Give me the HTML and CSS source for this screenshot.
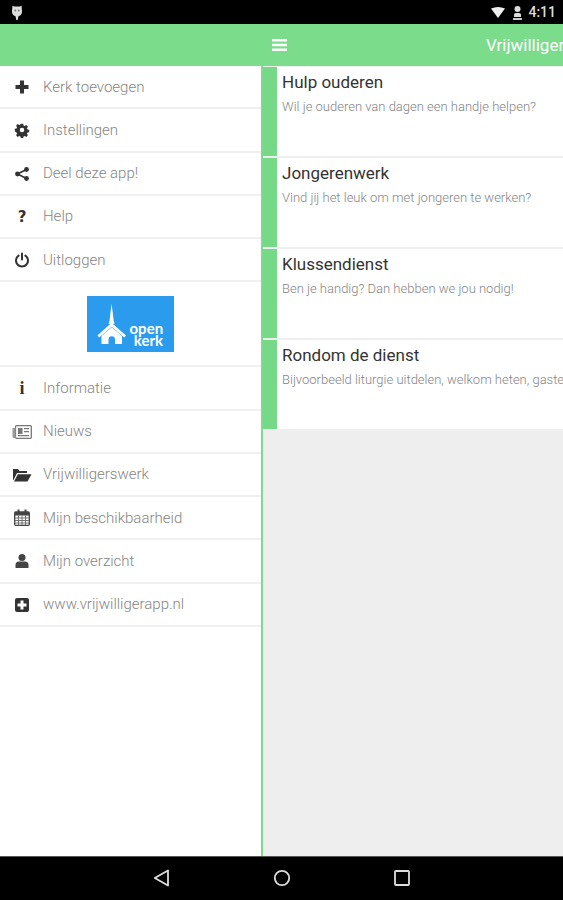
FILE: index.html
```html
<!DOCTYPE html>
<html lang="nl">
<head>
    <meta charset="UTF-8">
    <meta name="viewport" content="width=device-width, initial-scale=1.0">
    <title>Vrijwilligerswerk</title>
    <link rel="stylesheet" href="styles.css">
</head>
<body>
    <div class="statusbar">
        <svg class="status-pin" width="12" height="17" viewBox="0 0 12 17"><path fill="#ddd" d="M1.500 1.500l1.500 1h6l1.500-1 .5 5.500a5 5 0 0 1-3.500 5.200L6.700 16H5.300l-.8-3.800A5 5 0 0 1 1 7z"/><circle cx="4.300" cy="6.500" r=".9" fill="#777"/><circle cx="7.700" cy="6.500" r=".9" fill="#777"/></svg>
        <div class="status-right">
            <svg width="14" height="11" viewBox="0 0 14 11"><path fill="#eee" d="M0 1.500Q7-1.500 14 1.500L7 11z"/></svg>
            <svg width="11" height="15" viewBox="0 0 11 15"><path fill="#ccc" d="M1 13h9v2H1z"/><circle cx="5.500" cy="4" r="3" fill="#ddd"/><path fill="#ddd" d="M2 12V9.500Q2 8 4 8h3q2 0 2 1.500V12z"/></svg>
            <span class="status-time">4:11</span>
        </div>
    </div>

    <div class="topbar">
        <svg class="burger" width="15" height="12" viewBox="0 0 15 12"><path fill="#fff" d="M0 0h15v2.600H0zM0 4.700h15v2.600H0zM0 9.400h15V12H0z"/></svg>
        <span class="topbar-title">Vrijwilligerswerk</span>
    </div>

    <div class="content">
        <div class="sidebar">
            <a class="menu-item">
                <svg class="menu-icon" viewBox="0 0 16 16"><path fill="#333" d="M6 1.500h4V6h4.500v4H10v4.500H6V10H1.500V6H6z"/></svg>
                Kerk toevoegen
            </a>
            <a class="menu-item">
                <svg class="menu-icon" viewBox="0 0 16 16"><path fill="#333" fill-rule="evenodd" d="M6.700 1h2.600l.4 2 1.300.6 1.800-1.100 1.800 1.800-1.100 1.800.6 1.300 1.900.4v2.600l-1.900.4-.6 1.300 1.100 1.800-1.800 1.800-1.800-1.100-1.300.6-.4 1.900H6.700l-.4-1.900-1.300-.6-1.800 1.100-1.800-1.800 1.100-1.800-.6-1.300L0 9.300V6.700l1.900-.4.6-1.300-1.100-1.800 1.800-1.800L5 2.500l1.300-.5zM8 5.500a2.500 2.500 0 1 0 0 5 2.500 2.500 0 0 0 0-5z" transform="translate(.8 .8) scale(.9)"/></svg>
                Instellingen
            </a>
            <a class="menu-item">
                <svg class="menu-icon" viewBox="0 0 16 16"><path stroke="#333" stroke-width="1.600" fill="none" d="M12.500 3.500L3.500 8l9 4.500"/><circle cx="12.500" cy="3.500" r="2.400" fill="#333"/><circle cx="3.500" cy="8" r="2.400" fill="#333"/><circle cx="12.500" cy="12.500" r="2.400" fill="#333"/></svg>
                Deel deze app!
            </a>
            <a class="menu-item">
                <span class="menu-glyph">?</span>
                Help
            </a>
            <a class="menu-item">
                <svg class="menu-icon" viewBox="0 0 16 16"><path fill="none" stroke="#333" stroke-width="2" stroke-linecap="round" d="M4.600 3.600a6 6 0 1 0 6.800 0M8 1.500v6"/></svg>
                Uitloggen
            </a>

            <div class="logo-row">
                <div class="logo">
                    <svg class="logo-church" width="32" height="42" viewBox="0 0 32 42"><path fill="#fff" d="M15.500 0l1.300 9 .9 8 1 2.500-1.800.6 13.100 11.400-1.800 2-12.500-10.800L3.200 33.500l-1.800-2 12.800-11.400-1.700-.6 1-2.500.9-8z"/><path fill="#fff" fill-rule="evenodd" d="M5.500 32l10.200-8.800L26 32v8H5.500zM12.500 40H19v-4.500a3.200 3.200 0 0 0-6.500 0z"/></svg>
                    <div class="logo-text"><span>open</span><span>kerk</span></div>
                </div>
            </div>

            <a class="menu-item">
                <span class="menu-glyph menu-glyph-info">i</span>
                Informatie
            </a>
            <a class="menu-item">
                <svg class="menu-icon menu-icon-wide" viewBox="0 0 20 14"><rect x="3.500" y=".7" width="15.800" height="12.600" rx="1" fill="none" stroke="#777" stroke-width="1.300"/><path fill="#999" d="M.5 3h3v10H2a1.500 1.500 0 0 1-1.500-1.500z"/><path fill="#777" d="M6 3h4.500v6H6zM12 3h5v1.300h-5zM12 6h5v1.300h-5zM6 10h11v1.300H6z"/></svg>
                Nieuws
            </a>
            <a class="menu-item">
                <svg class="menu-icon menu-icon-wide" viewBox="0 0 20 14"><path fill="#333" d="M1 1h5l1.500 2H15v2H5L1.500 12H1z"/><path fill="#333" d="M5.800 6.200h13.700l-4 7.300H2z"/></svg>
                Vrijwilligerswerk
            </a>
            <a class="menu-item">
                <svg class="menu-icon menu-icon-tall" viewBox="0 0 16 17"><rect x=".7" y="3" width="14.600" height="13.300" rx="1" fill="none" stroke="#444" stroke-width="1.300"/><path fill="#444" d="M1 3h14v3.500H1zM3.500.5h2v4h-2zM10.500.5h2v4h-2z"/><path stroke="#666" stroke-width=".9" d="M1 9h14M1 11.500h14M1 14h14M4.500 6.500V16M8 6.500V16M11.500 6.500V16"/></svg>
                Mijn beschikbaarheid
            </a>
            <a class="menu-item">
                <svg class="menu-icon" viewBox="0 0 16 16"><circle cx="8" cy="4.500" r="3.500" fill="#444"/><path fill="#444" d="M1.500 15v-3q0-3.500 3.500-3.500h6q3.500 0 3.500 3.500v3z"/></svg>
                Mijn overzicht
            </a>
            <a class="menu-item">
                <svg class="menu-icon" viewBox="0 0 16 16"><path fill="#333" fill-rule="evenodd" d="M3 1h10a2 2 0 0 1 2 2v10a2 2 0 0 1-2 2H3a2 2 0 0 1-2-2V3a2 2 0 0 1 2-2zM6.500 3.500v3h-3v3h3v3h3v-3h3v-3h-3v-3z"/></svg>
                www.vrijwilligerapp.nl
            </a>
        </div>

        <div class="main">
            <div class="card">
                <div class="card-title">Hulp ouderen</div>
                <div class="card-text">Wil je ouderen van dagen een handje helpen?</div>
            </div>
            <div class="card">
                <div class="card-title">Jongerenwerk</div>
                <div class="card-text">Vind jij het leuk om met jongeren te werken?</div>
            </div>
            <div class="card">
                <div class="card-title">Klussendienst</div>
                <div class="card-text">Ben je handig? Dan hebben we jou nodig!</div>
            </div>
            <div class="card">
                <div class="card-title">Rondom de dienst</div>
                <div class="card-text">Bijvoorbeeld liturgie uitdelen, welkom heten, gasten ontvangen</div>
            </div>
        </div>
    </div>

    <div class="navbar">
        <svg width="17" height="18" viewBox="0 0 17 18"><path fill="none" stroke="#ddd" stroke-width="1.800" stroke-linejoin="round" d="M15 1.500v15L1.800 9z"/></svg>
        <svg width="18" height="18" viewBox="0 0 18 18"><circle cx="9" cy="9" r="7.200" fill="none" stroke="#ddd" stroke-width="1.800"/></svg>
        <svg width="16" height="16" viewBox="0 0 16 16"><rect x="1" y="1" width="14" height="14" rx="1" fill="none" stroke="#ddd" stroke-width="1.800"/></svg>
    </div>
</body>
</html>
```

FILE: styles.css
```css
html, body {
    margin: 0;
    height: 100%;
}
body {
    width: 563px;
    height: 900px;
    display: flex;
    flex-direction: column;
    overflow: hidden;
    font-family: Roboto, "Liberation Sans", sans-serif;
    background: #eee;
}
.statusbar {
    height: 24px;
    flex: none;
    background: #000;
    display: flex;
    align-items: center;
    justify-content: space-between;
    padding: 0 7px 0 11px;
}
.status-right {
    display: flex;
    align-items: center;
    gap: 7px;
}
.status-time {
    color: #ddd;
    font-size: 14px;
    font-weight: 500;
    margin-left: -2px;
}
.topbar {
    height: 42px;
    flex: none;
    background: #7bdc8c;
    display: flex;
    align-items: center;
    padding-left: 272px;
    overflow: hidden;
    white-space: nowrap;
}
.burger {
    flex: none;
}
.topbar-title {
    color: #fff;
    font-size: 17px;
    margin-left: 199px;
}
.content {
    flex: 1;
    display: flex;
    min-height: 0;
}
.sidebar {
    width: 261px;
    flex: none;
    background: #fff;
    border-right: 2px solid #7bdc8c;
}
.menu-item {
    height: 43.25px;
    box-sizing: border-box;
    display: flex;
    align-items: center;
    padding-left: 43px;
    position: relative;
    color: #858585;
    font-size: 15px;
    font-weight: 300;
    border-bottom: 2px solid #f0f0f0;
}
.menu-icon, .menu-glyph {
    position: absolute;
    left: 14px;
    top: 13px;
    width: 16px;
    height: 16px;
}
.menu-icon-wide {
    left: 12px;
    width: 20px;
    height: 14px;
    top: 14px;
}
.menu-icon-tall {
    height: 17px;
    top: 12px;
}
.menu-glyph {
    color: #333;
    font-family: "DejaVu Sans", sans-serif;
    font-size: 15px;
    font-weight: bold;
    line-height: 16px;
    text-align: center;
}
.menu-glyph-info {
    font-family: "Liberation Serif", serif;
    font-size: 18px;
}
.logo-row {
    height: 85px;
    box-sizing: border-box;
    display: flex;
    align-items: center;
    justify-content: center;
    border-bottom: 2px solid #f0f0f0;
}
.logo {
    width: 87px;
    height: 56px;
    background: #2b9bee;
    display: flex;
    align-items: flex-end;
    padding: 0 0 6px 9px;
    box-sizing: border-box;
    margin-left: -1px;
}
.logo-church {
    flex: none;
}
.logo-text {
    display: flex;
    flex-direction: column;
    color: #fff;
    font-family: Lato, sans-serif;
    font-weight: bold;
    font-size: 15px;
    line-height: 12px;
    align-items: flex-end;
    margin: 0 0 0 2px;
}
.main {
    flex: 1;
    min-width: 0;
    display: flex;
    flex-direction: column;
    gap: 2px;
    padding-top: 1px;
    overflow: hidden;
}
.card {
    height: 89px;
    flex: none;
    box-sizing: border-box;
    background: #fff;
    border-left: 14px solid #76d987;
    padding: 5px 0 0 5px;
    white-space: nowrap;
}
.card-title {
    color: #333;
    font-size: 17px;
    line-height: 20px;
}
.card-text {
    color: #858585;
    font-size: 13px;
    font-weight: 300;
    line-height: 14px;
    margin-top: 8px;
}
.navbar {
    height: 44px;
    flex: none;
    box-sizing: border-box;
    background: #000;
    border-top: 1px solid #555;
    display: flex;
    align-items: center;
    justify-content: center;
    gap: 103px;
    padding: 0 0 2px 0;
}
```
